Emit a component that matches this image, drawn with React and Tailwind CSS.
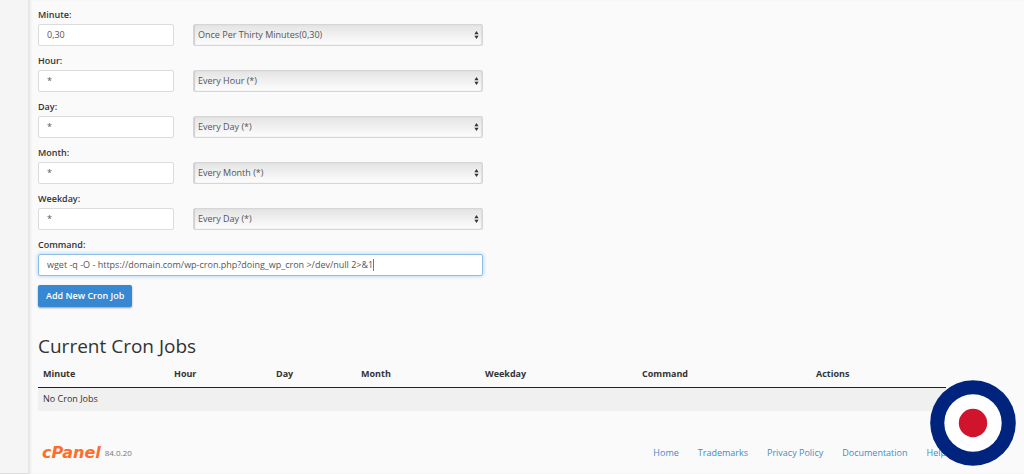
import React, { useState } from 'react';

const SCHEDULE_FIELDS = [
  { id: 'minute', label: 'Minute:', value: '0,30', option: 'Once Per Thirty Minutes(0,30)' },
  { id: 'hour', label: 'Hour:', value: '*', option: 'Every Hour (*)' },
  { id: 'day', label: 'Day:', value: '*', option: 'Every Day (*)' },
  { id: 'month', label: 'Month:', value: '*', option: 'Every Month (*)' },
  { id: 'weekday', label: 'Weekday:', value: '*', option: 'Every Day (*)' },
];

const COLUMNS = [
  { name: 'Minute', width: 'w-[131px]' },
  { name: 'Hour', width: 'w-[102px]' },
  { name: 'Day', width: 'w-[85px]' },
  { name: 'Month', width: 'w-[124px]' },
  { name: 'Weekday', width: 'w-[157px]' },
  { name: 'Command', width: 'w-[174px]' },
  { name: 'Actions', width: 'w-[135px]' },
];

const FOOTER_LINKS = ['Home', 'Trademarks', 'Privacy Policy', 'Documentation', 'Help'];

const FieldLabel = ({ htmlFor, children }) => (
  <label htmlFor={htmlFor} className="block h-4 leading-[14px] font-semibold text-[#333]">
    {children}
  </label>
);

const ScheduleField = ({ id, label, value, option }) => (
  <div>
    <FieldLabel htmlFor={id}>{label}</FieldLabel>
    <div className="flex gap-[19px]">
      <input
        id={id}
        type="text"
        defaultValue={value}
        className="h-[22px] w-34 rounded-xs border border-[#dcdcdc] bg-white px-2 pb-0.5 text-[#555] outline-none"
      />
      <div className="relative min-w-0 flex-1">
        <select
          aria-label={`${label} common settings`}
          className="h-[22px] w-full appearance-none rounded-xs border border-[#d6d6d6] bg-linear-to-b from-[#e4e4e4] to-[#fdfdfd] px-1 text-[#555] shadow-[inset_1px_0_1px_#ccc,inset_-1px_0_1px_#ddd] outline-none"
        >
          <option>{option}</option>
        </select>
        <svg viewBox="0 0 5 8" className="pointer-events-none absolute top-[7px] right-1 h-2 w-[5px]" fill="#333" aria-hidden="true">
          <path d="M2.5 0 4.6 3.2H.4zM2.5 8 .4 4.8h4.2z" />
        </svg>
      </div>
    </div>
  </div>
);

const Roundel = () => (
  <svg viewBox="0 0 86 86" className="fixed right-2 bottom-2 size-[86px]" aria-hidden="true">
    <circle cx="43" cy="43" r="42.8" fill="#00247d" />
    <circle cx="43" cy="43" r="28.7" fill="#fff" />
    <circle cx="43" cy="43" r="14.2" fill="#cf142b" />
  </svg>
);

export default function App() {
  const [command, setCommand] = useState('wget -q -O - https://domain.com/wp-cron.php?doing_wp_cron >/dev/null 2>&1');

  return (
    <div className="flex min-h-screen bg-[#fafafa] font-['Open_Sans',sans-serif] text-[9px] leading-3 text-[#333]">
      <aside className="w-7 shrink-0 border-b border-[#ddd] bg-[#f5f5f5]" />
      <main className="min-w-0 flex-1 pt-2 pr-[78px] pl-[10px] shadow-[inset_3px_0_3px_-1px_#e2e2e2]">
        <form className="max-w-[445px]" onSubmit={(e) => e.preventDefault()}>
          <div className="space-y-2">
            {SCHEDULE_FIELDS.map((field) => (
              <ScheduleField key={field.id} {...field} />
            ))}
            <div>
              <FieldLabel htmlFor="command">Command:</FieldLabel>
              <div className="relative">
                <input
                  id="command"
                  type="text"
                  autoFocus
                  value={command}
                  onChange={(e) => setCommand(e.target.value)}
                  className="h-[22px] w-full rounded-xs border border-[#8dbde8] bg-white px-2 pb-0.5 text-[#555] caret-transparent shadow-[0_0_4px_#a9cff0] outline-none"
                />
                <span className="pointer-events-none absolute top-[5px] left-[335px] h-3 w-px bg-[#777]" aria-hidden="true" />
              </div>
            </div>
          </div>
          <button
            type="submit"
            className="mt-[9px] h-[22px] rounded-xs bg-[#3588d1] px-2 font-semibold text-white shadow-[0_1px_2px_#999]"
          >
            Add New Cron Job
          </button>
        </form>

        <h2 className="mt-6 text-[19px] leading-[30px] text-[#333]">Current Cron Jobs</h2>
        <table className="w-full table-fixed text-left">
          <thead>
            <tr className="h-[26px] border-b border-[#222]">
              {COLUMNS.map(({ name, width }) => (
                <th key={name} className={`${width} px-[5px] font-bold`}>{name}</th>
              ))}
            </tr>
          </thead>
          <tbody>
            <tr className="h-6 bg-[#f0f0f0]">
              <td colSpan={COLUMNS.length} className="px-[5px]">No Cron Jobs</td>
            </tr>
          </tbody>
        </table>

        <footer className="mt-8 flex h-5 items-center justify-between">
          <div className="flex items-center gap-1 pl-1">
            <span className="font-['DejaVu_Sans',sans-serif] text-[16px] leading-5 font-bold text-[#ff6c2c] italic">cPanel</span>
            <span className="text-[8px] text-[#777]">84.0.20</span>
          </div>
          <nav className="flex gap-[19px]">
            {FOOTER_LINKS.map((link) => (
              <a key={link} href="#" className="text-[#428bca]">{link}</a>
            ))}
          </nav>
        </footer>
      </main>
      <Roundel />
    </div>
  );
}
